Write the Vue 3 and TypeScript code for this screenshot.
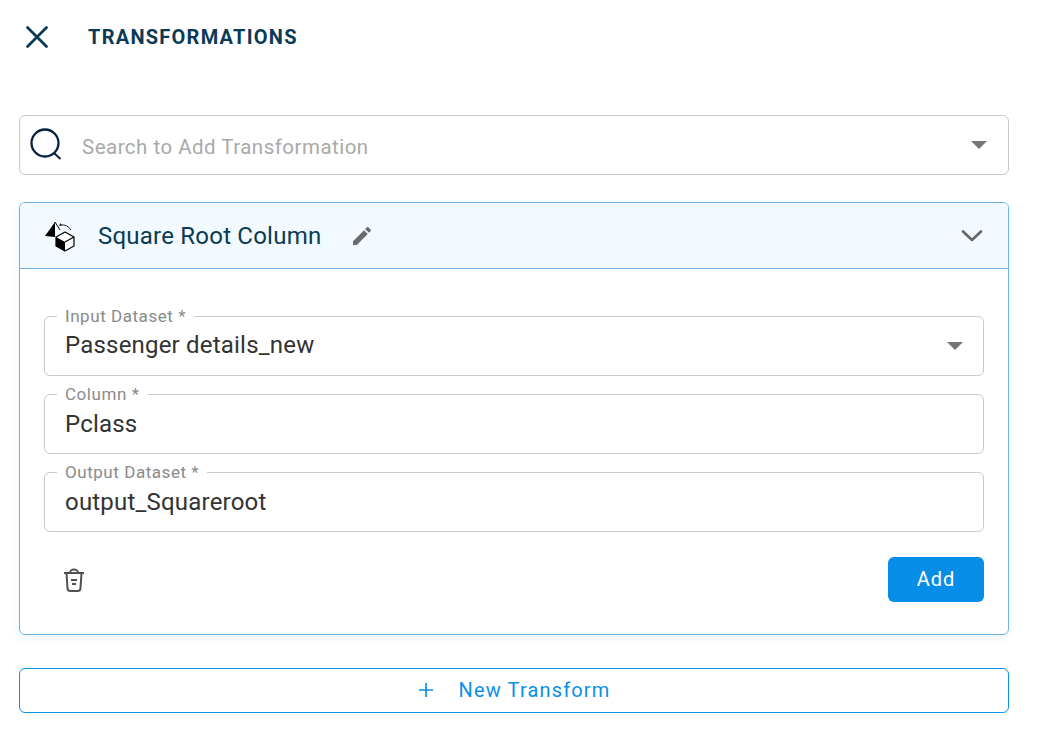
<script setup lang="ts">
const fields = [
  { label: 'Input Dataset *', value: 'Passenger details_new', select: true },
  { label: 'Column *', value: 'Pclass', select: false },
  { label: 'Output Dataset *', value: 'output_Squareroot', select: false },
]
</script>

<template>
  <div class="panel">
    <header class="top">
      <svg class="close" width="24" height="24" viewBox="0 0 24 24"><path d="M2.5 2.5 L21.5 21.5 M21.5 2.5 L2.5 21.5" stroke="#0a3a55" stroke-width="2.8" stroke-linecap="round" fill="none" /></svg>
      <h1>TRANSFORMATIONS</h1>
    </header>

    <div class="search">
      <svg class="lens" width="34" height="34" viewBox="0 0 34 34"><circle cx="15" cy="15" r="13.5" stroke="#06203f" stroke-width="2.3" fill="none" /><path d="M24 25 L30.5 31" stroke="#06203f" stroke-width="2" /></svg>
      <span class="placeholder">Search to Add Transformation</span>
      <span class="caret"></span>
    </div>

    <section class="card">
      <div class="card-head">
        <svg class="cube" width="32" height="32" viewBox="0 0 32 32">
          <path d="M1 16 L11 2 L11 17 Z" fill="#000" />
          <path d="M11 2 L16 10" stroke="#000" stroke-width="1" fill="none" />
          <path d="M16 5 A11 11 0 0 1 27 10" stroke="#222" stroke-width="1" fill="none" />
          <path d="M16.5 3 L15 5.5 L18 6 Z" fill="#222" />
          <path d="M12 17 L21 12 L30 17 V26 L21 31 L12 26 Z" fill="#fff" stroke="#000" stroke-width="1.2" stroke-linejoin="round" />
          <path d="M12 17 L21 22 L21 31 L12 26 Z" fill="#000" />
          <path d="M21 22 L30 17" stroke="#000" stroke-width="1.2" />
        </svg>
        <span class="title">Square Root Column</span>
        <svg class="pencil" width="24" height="24" viewBox="0 0 24 24"><path d="M3 17.25V21h3.75L17.81 9.94l-3.75-3.75L3 17.25zM20.71 7.04a1 1 0 0 0 0-1.41l-2.34-2.34a1 1 0 0 0-1.41 0l-1.83 1.83 3.75 3.75 1.83-1.83z" fill="#6b6b6b" /></svg>
        <svg class="chev" width="24" height="24" viewBox="0 0 24 24"><path d="M3 7.5 L12 16 L21 7.5" stroke="#666" stroke-width="2.6" stroke-linecap="round" stroke-linejoin="round" fill="none" /></svg>
      </div>

      <div class="card-body">
        <div v-for="f in fields" :key="f.label" class="field">
          <span class="legend">{{ f.label }}</span>
          <span class="value" :class="{ 'value-select': f.select }">{{ f.value }}</span>
          <span v-if="f.select" class="caret"></span>
        </div>

        <div class="actions">
          <svg class="trash" width="24" height="24" viewBox="0 0 24 24" fill="none" stroke="#505050" stroke-width="2"><path d="M2 5 H22" /><path d="M8 5 A4 3.4 0 0 1 16 5" /><path d="M4.5 5 L5.5 20 A3 3 0 0 0 8.5 23 H15.5 A3 3 0 0 0 18.5 20 L19.5 5" /><path d="M9 12 H15" /><path d="M10 16 H14" /></svg>
          <button class="add">Add</button>
        </div>
      </div>
    </section>

    <button class="new">
      <svg width="16" height="16" viewBox="0 0 16 16"><path d="M8 1 V15 M1 8 H15" stroke="#0a90e8" stroke-width="1.7" /></svg>
      New Transform
    </button>
  </div>
</template>

<style scoped>
.panel {
  box-sizing: border-box;
  width: 1039px;
  height: 734px;
  padding: 0 30px 0 19px;
  background: #fff;
  font-family: Roboto, "Liberation Sans", sans-serif;
  overflow: hidden;
}
.top {
  display: flex;
  align-items: center;
  height: 73px;
  padding-left: 6px;
}
.top h1 {
  margin: 0 0 0 39px;
  font-size: 20px;
  font-weight: 700;
  letter-spacing: 1.25px;
  color: #0a3a55;
}
.close { width: 24px; height: 24px; }
.search {
  display: flex;
  align-items: center;
  box-sizing: border-box;
  height: 60px;
  margin-top: 42px;
  padding: 0 21px 0 10px;
  border: 1px solid #c9c9c9;
  border-radius: 6px;
}
.placeholder {
  flex: 1;
  margin-left: 18px;
  padding-top: 3px;
  font-size: 20.5px;
  letter-spacing: 0.48px;
  color: #a9a9a9;
}
.caret {
  width: 0;
  height: 0;
  border-left: 8px solid transparent;
  border-right: 8px solid transparent;
  border-top: 8px solid #757575;
}
.card {
  box-sizing: border-box;
  height: 433px;
  margin-top: 27px;
  border: 1px solid #6db3ea;
  border-radius: 6px;
  box-shadow: 0 4px 10px rgba(60, 130, 200, 0.09);
}
.card-head {
  display: flex;
  align-items: center;
  box-sizing: border-box;
  height: 66px;
  padding: 0 24px;
  background: #f2f9ff;
  border-bottom: 1px solid #6db3ea;
  border-radius: 5px 5px 0 0;
}
.title {
  margin-left: 22px;
  font-size: 24px;
  letter-spacing: 0.22px;
  color: #0a3a55;
}
.pencil { margin-left: 29px; }
.chev { margin-left: auto; }
.card-body {
  padding: 47px 24px 0;
}
.field {
  position: relative;
  display: flex;
  align-items: center;
  box-sizing: border-box;
  height: 60px;
  margin-bottom: 18px;
  padding: 0 20px;
  border: 1px solid #c9c9c9;
  border-radius: 6px;
}
.legend {
  position: absolute;
  top: -10px;
  left: 12px;
  padding: 0 8px;
  background: #fff;
  font-size: 17px;
  line-height: 18px;
  letter-spacing: 0.55px;
  color: #8a8a8a;
}
.value {
  flex: 1;
  font-size: 24px;
  letter-spacing: 0.2px;
  color: #333;
}
.value-select { padding-bottom: 2px; }
.actions {
  display: flex;
  align-items: center;
  justify-content: space-between;
  margin-top: 25px;
  padding-left: 18px;
}
.add {
  width: 96px;
  height: 45px;
  padding-bottom: 2px;
  border: 0;
  border-radius: 6px;
  background: #068de8;
  color: #fff;
  font-family: inherit;
  font-size: 20px;
  font-weight: 400;
  letter-spacing: 0.9px;
}
.new {
  display: flex;
  align-items: center;
  justify-content: center;
  gap: 25px;
  box-sizing: border-box;
  width: 100%;
  height: 45px;
  margin-top: 33px;
  padding: 0 0 2px;
  border: 1px solid #0a93ea;
  border-radius: 6px;
  background: #fff;
  color: #0a90e8;
  font-family: inherit;
  font-size: 20px;
  font-weight: 400;
  letter-spacing: 1.15px;
}
</style>
